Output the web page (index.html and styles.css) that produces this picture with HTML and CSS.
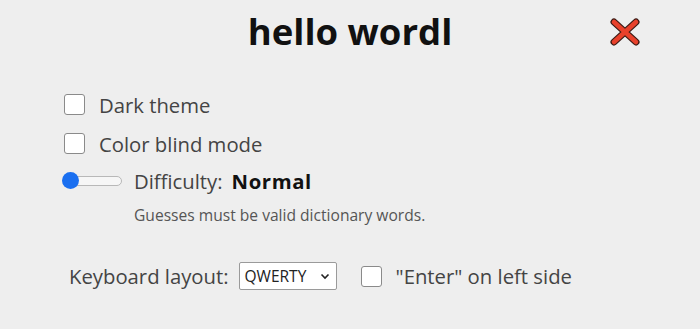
FILE: index.html
```html
<!DOCTYPE html>
<html>
<head>
<meta charset="utf-8">
<link rel="stylesheet" href="styles.css">
</head>
<body>
<div class="page">
  <header class="header">
    <h1 class="title">hello wordl</h1>
    <button class="close" aria-label="close">
      <svg width="30" height="28" viewBox="0 0 30 28">
        <path d="M4 4 L26 24 M26 4 L4 24" stroke="#3a1a14" stroke-width="7" stroke-linecap="round"/>
        <path d="M4 4 L26 24 M26 4 L4 24" stroke="#e8412b" stroke-width="4.6" stroke-linecap="round"/>
      </svg>
    </button>
  </header>
  <div class="settings">
    <label class="row"><span class="box"></span><span>Dark theme</span></label>
    <label class="row"><span class="box"></span><span>Color blind mode</span></label>
    <div class="row diff">
      <span class="slider"><span class="track"></span><span class="thumb"></span></span>
      <span class="dlabel">Difficulty:</span><strong class="dval">Normal</strong>
    </div>
    <div class="hint">Guesses must be valid dictionary words.</div>
    <div class="kbrow">
      <span>Keyboard layout:</span>
      <span class="select">QWERTY<svg width="10" height="7" viewBox="0 0 10 7"><path d="M1.5 1.5 L5 5 L8.5 1.5" fill="none" stroke="#222" stroke-width="1.6"/></svg></span>
      <label class="row inline"><span class="box"></span><span>"Enter" on left side</span></label>
    </div>
  </div>
</div>
</body>
</html>
```
FILE: styles.css
```css
html, body {
  margin: 0;
  padding: 0;
  background: #eeeeee;
}
body {
  font-family: "Open Sans", "Noto Sans", sans-serif;
  color: #444;
  width: 700px;
  height: 329px;
  overflow: hidden;
}
.page {
  position: relative;
}
.header {
  height: 66px;
  display: flex;
  justify-content: center;
  align-items: center;
}
.title {
  margin: 0 0 4px 0;
  font-size: 36.5px;
  font-weight: 700;
  color: #111;
}
.close {
  position: absolute;
  left: 610px;
  top: 18px;
  border: 0;
  background: none;
  padding: 0;
  line-height: 0;
}
.settings {
  padding-left: 64px;
  display: flex;
  flex-direction: column;
}
.row {
  display: flex;
  align-items: center;
  font-size: 20.3px;
  height: 39px;
}
.box {
  width: 19px;
  height: 19px;
  border: 1px solid #8a8a8a;
  border-radius: 3px;
  background: #fff;
  margin-right: 14px;
  box-sizing: content-box;
}
.settings > .row:first-child {
  margin-top: 19px;
}
.diff {
  margin-left: -2px;
  height: 35px;
}
.slider {
  position: relative;
  width: 60px;
  height: 17px;
  margin-right: 12px;
}
.track {
  position: absolute;
  left: 4px;
  right: 0;
  top: 4px;
  height: 8px;
  border: 1px solid #b8b8b8;
  border-radius: 5px;
  background: #f6f6f6;
}
.thumb {
  position: absolute;
  left: 0;
  top: 0;
  width: 17px;
  height: 17px;
  border-radius: 50%;
  background: #1a6ff0;
}
.dlabel {
  margin-right: 9px;
}
.dval {
  color: #111;
  font-weight: 700;
  letter-spacing: 0.6px;
}
.hint {
  font-size: 15.6px;
  line-height: 21px;
  margin-left: 70px;
  margin-top: 7px;
  color: #555;
}
.kbrow {
  margin-top: 36px;
  margin-left: 5px;
  display: flex;
  align-items: center;
  font-size: 20.3px;
  height: 28px;
}
.select {
  margin-left: 10px;
  width: 98px;
  height: 28px;
  box-sizing: border-box;
  border: 1px solid #9a9a9a;
  border-radius: 2px;
  background: #fff;
  font-size: 15.5px;
  color: #222;
  display: flex;
  align-items: center;
  justify-content: space-between;
  padding: 0 6px 0 5px;
}
.inline {
  margin-left: 24px;
}
```
